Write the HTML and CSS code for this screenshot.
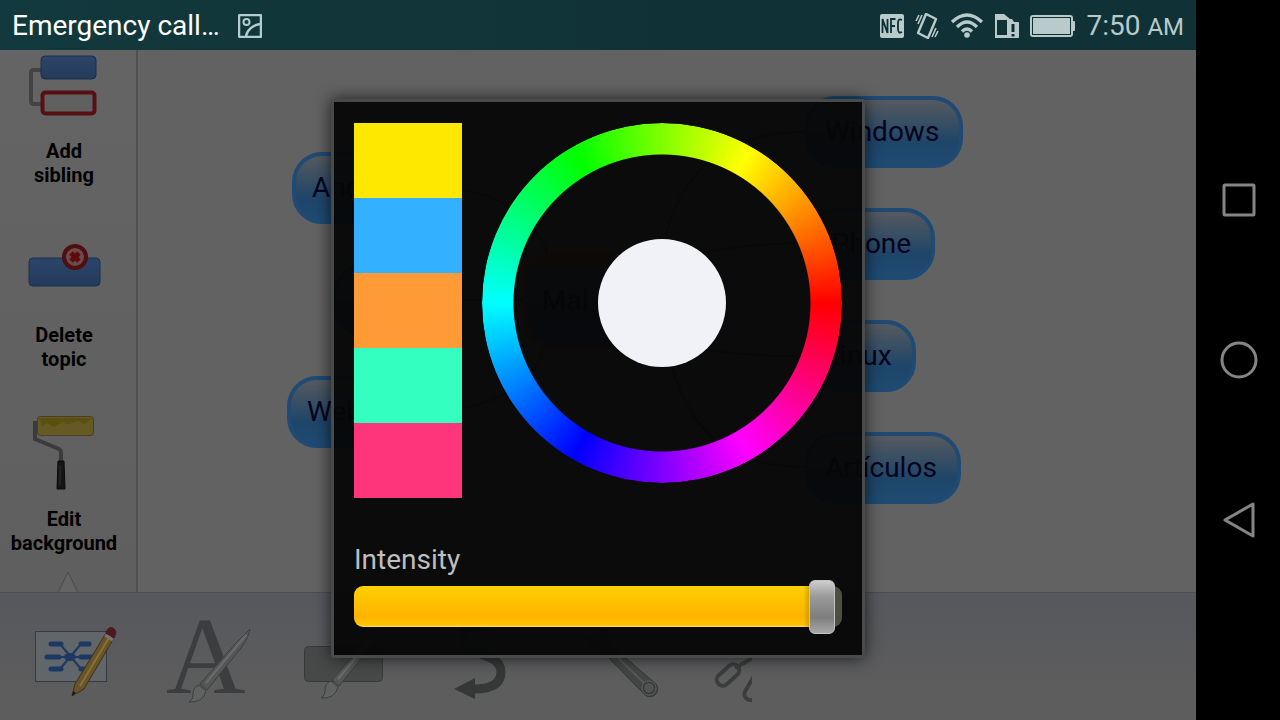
FILE: index.html
```html
<!DOCTYPE html>
<html lang="en">
<head>
  <meta charset="UTF-8" />
  <meta name="viewport" content="width=device-width, initial-scale=1.0" />
  <title>Mind map - Color</title>
  <link rel="stylesheet" href="styles.css">
</head>
<body>
  <div class="screen">
    <header class="status">
      <span class="carrier">Emergency call…</span>
      <svg class="shot" width="24" height="24" viewBox="0 0 24 24" fill="none" stroke="#b4cdd0" stroke-width="2">
        <rect x="1" y="1" width="22" height="22" rx="1" stroke-width="2.500"/>
        <circle cx="8.500" cy="8" r="3"/>
        <path d="M8 22C9 16 15 11 22 10" stroke-width="2.500"/>
      </svg>
      <div class="indicators">
        <svg width="24" height="24" viewBox="0 0 24 24">
          <rect width="24" height="24" rx="2" fill="#b9cacb"/>
          <path d="M2.500 19V5L7.500 19V5M11 19V5H15.500M11 12H15M22 6Q18 4 18 9V15Q18 20 22 18" fill="none" stroke="#0f3033" stroke-width="1.800"/>
        </svg>
        <svg width="24" height="26" viewBox="0 0 24 26" fill="none" stroke="#b9cacb" stroke-width="1.600">
          <path d="M11 1L21 6L13 25L3 20Z" stroke-width="2.400" stroke-linejoin="round"/>
          <path d="M1 8L4 2M3 11L7 2M17 24L21 15M20 24L23 18"/>
        </svg>
        <svg width="34" height="26" viewBox="0 0 34 26" fill="none" stroke="#b9cacb" stroke-width="3.400">
          <path d="M2 9Q17 -5 32 9M7 14Q17 4 27 14M12 18.500Q17 13.500 22 18.500"/>
          <circle cx="17" cy="22" r="2.800" fill="#b9cacb" stroke="none"/>
        </svg>
        <svg width="24" height="24" viewBox="0 0 24 24">
          <path d="M0 0H9L15 5V10H12V21H14V24H0ZM2 6V21H12V6Z" fill="#b9cacb" fill-rule="evenodd"/>
          <path d="M12 5H17L19 8H12Z" fill="#b9cacb"/>
          <rect x="12" y="8" width="12" height="16" rx="1" fill="#b9cacb"/>
          <path d="M18 10V18M18 20V22.500" stroke="#0f3033" stroke-width="3"/>
        </svg>
        <svg width="45" height="24" viewBox="0 0 45 24">
          <rect x="1" y="2" width="41" height="20" rx="2" fill="#b9cacb" stroke="#b9cacb" stroke-width="2"/>
          <rect x="2.500" y="3.500" width="38" height="17" fill="none" stroke="#0f3033"/>
          <rect x="42" y="7" width="3" height="10" rx="1" fill="#b9cacb"/>
        </svg>
        <span class="clock">7:50 <small>AM</small></span>
      </div>
    </header>

    <div class="workspace">
      <nav class="sidebar">
        <ul>
          <li><button type="button">
            <svg viewBox="0 0 128 136">
              <path d="M42 67H34Q31 67 31 70V98Q31 101 34 101H42" fill="none" stroke="#424242" stroke-width="4"/>
              <rect x="41" y="53" width="55" height="23" rx="4" fill="url(#blue)" stroke="#1b3050"/>
              <rect x="42.500" y="89.500" width="52" height="21" rx="3" fill="#606060" stroke="#561012" stroke-width="4"/>
            </svg>
            <span>Add<br>sibling</span>
          </button></li>
          <li><button type="button">
            <svg viewBox="0 0 128 136">
              <rect x="29" y="71" width="71" height="28" rx="4" fill="url(#blue)" stroke="#1b3050"/>
              <circle cx="75" cy="70" r="11" fill="#6b4c4c" stroke="#500e10" stroke-width="4"/>
              <path d="M71 66L79 74M79 66L71 74" stroke="#600a0c" stroke-width="5"/>
            </svg>
            <span>Delete<br>topic</span>
          </button></li>
          <li><button type="button">
            <svg viewBox="0 0 128 136">
              <path d="M39 52H35V68L59 78Q61 79 61 82V90" fill="none" stroke="#3b3b3b" stroke-width="4"/>
              <rect x="37.500" y="45.500" width="56" height="19" rx="3" fill="#655a24" stroke="#493f20"/>
              <path d="M39 47H92L85 53L78 50L68 53L62 51L54 56L47 52L42 55Z" fill="#5b4f12"/>
              <path d="M58 90H64L65 118H57Z" fill="#151515" stroke="#0a0a0a"/>
              <path d="M60 94V114" stroke="#333"/>
            </svg>
            <span>Edit<br>background</span>
          </button></li>
          <li><button type="button" aria-label="More">
            <svg viewBox="0 0 128 136">
              <path d="M56 42L68 17L80 42Z" fill="#646464" stroke="#4b4b4b"/>
            </svg>
          </button></li>
        </ul>
      </nav>

      <main class="canvas">
        <svg class="links" fill="none" stroke="#353535" stroke-width="2">
          <path d="M524 205C535 130 580 82 667 82M540 210C580 197 620 194 667 193M540 293C580 304 620 306 667 306M530 300C545 370 580 417 667 417"/>
          <path d="M300 139C360 139 395 165 410 205M300 250H384M300 360C360 358 400 330 405 297"/>
        </svg>
        <div class="node android">Android</div>
        <div class="node middle"></div>
        <div class="node web">Web</div>
        <div class="node root">Mal</div>
        <div class="node windows">Windows</div>
        <div class="node iphone">iPhone</div>
        <div class="node linux">Linux</div>
        <div class="node articulos">Artículos</div>
      </main>
    </div>

    <footer class="toolbar">
      <button type="button" aria-label="Edit map">
        <svg viewBox="0 0 136 127">
          <rect x="28.500" y="38.500" width="71" height="50" fill="#60666a" stroke="#353b43"/>
          <path d="M44 51H54M44 76H54M40 64H52M74 51H82M74 76H82M74 64H86" stroke="#1b3962" stroke-width="5" stroke-linecap="round"/>
          <path d="M53 51L74 76M53 76L74 51M50 64H76" stroke="#1b3962" stroke-width="2"/>
          <ellipse cx="63" cy="64" rx="6" ry="4" fill="#1b3962"/>
          <path d="M65 103L68 91L99 40L107 45L77 96Z" fill="#6a5427" stroke="#39301e"/>
          <path d="M73 93L103 43" stroke="#85703d" stroke-width="2"/>
          <path d="M65 103L66 98L69 100Z" fill="#1e1a15"/>
          <path d="M99 40Q101 33 106 35Q111 38 107 45Z" fill="#4b1a20" stroke="#4b1a20"/>
          <path d="M98 42L106 47" stroke="#777" stroke-width="3"/>
        </svg>
      </button>
      <button type="button" aria-label="Font style">
        <svg viewBox="0 0 136 127">
          <text class="letter" x="23" y="100">A</text>
          <use href="#brush" x="46" y="36"/>
        </svg>
      </button>
      <button type="button" aria-label="Topic style">
        <svg viewBox="0 0 136 127">
          <rect x="25.500" y="53.500" width="78" height="35" rx="4" fill="#474949" stroke="#383a3a"/>
          <use href="#brush" x="42" y="32"/>
        </svg>
      </button>
      <button type="button" aria-label="Connection">
        <svg viewBox="0 0 136 127">
          <path d="M76 34Q46 30 47 45C48 64 86 58 86 79Q86 96 59 96" fill="none" stroke="#363737" stroke-width="9"/>
          <path d="M39 96L60 85V106Z" fill="#363737"/>
        </svg>
      </button>
      <button type="button" aria-label="Settings">
        <svg viewBox="0 0 136 127">
          <path d="M34 42Q44 48 50 35Q60 42 60 52L105 91A7 7 0 0 1 93 101L51 58Q38 56 34 42Z" fill="#434545" stroke="#343636"/>
          <path d="M60 58L94 91" stroke="#565858" stroke-width="2"/>
          <circle cx="98" cy="95" r="6" fill="#515252" stroke="#373838" stroke-width="2"/>
          <circle cx="98" cy="95" r="7" fill="none" stroke="#606161"/>
        </svg>
      </button>
      <button type="button" aria-label="Link">
        <svg class="cut" viewBox="0 0 65 127">
          <g fill="none" stroke="#3b3d3d" stroke-width="4">
            <rect x="-13" y="-6" width="26" height="12" rx="6" transform="translate(41 82) rotate(-42)"/>
            <rect x="-13" y="-6" width="26" height="12" rx="6" transform="translate(67 95) rotate(-60)"/>
            <path d="M48 75L66 65"/>
          </g>
        </svg>
      </button>
    </footer>

    <div class="overlay">
      <section class="dialog" role="dialog" aria-label="Color">
        <div class="picker">
          <div class="swatches">
            <button type="button" class="yellow" aria-label="Yellow"></button>
            <button type="button" class="blue" aria-label="Blue"></button>
            <button type="button" class="orange" aria-label="Orange"></button>
            <button type="button" class="green" aria-label="Green"></button>
            <button type="button" class="pink" aria-label="Pink"></button>
          </div>
          <div class="wheel">
            <button type="button" class="current" aria-label="Current color"></button>
          </div>
        </div>
        <label for="intensity">Intensity</label>
        <input type="range" id="intensity" min="0" max="1000" value="984">
      </section>
    </div>
  </div>

  <nav class="navbar">
    <button type="button" aria-label="Recent">
      <svg viewBox="0 0 40 40"><rect x="5" y="5" width="30" height="30" rx="1"/></svg>
    </button>
    <button type="button" aria-label="Home">
      <svg viewBox="0 0 40 40"><circle cx="20" cy="20" r="17"/></svg>
    </button>
    <button type="button" aria-label="Back">
      <svg viewBox="0 0 40 40"><path d="M34 4V36L6 20Z"/></svg>
    </button>
  </nav>

  <!-- shared shapes -->
  <svg class="defs" width="0" height="0">
    <defs>
      <linearGradient id="blue" x1="0" y1="0" x2="0" y2="1">
        <stop offset="0" stop-color="#2b4568"/>
        <stop offset="1" stop-color="#243a5b"/>
      </linearGradient>
      <g id="brush">
        <path d="M61 0Q60 8 52 19L18 61L11 55L46 15Z" fill="#555757" stroke="#3c3e3e"/>
        <path d="M57 6L17 54" stroke="#6a6c6c" stroke-width="2"/>
        <path d="M10 56L17 62Q14 74 0 73Q5 70 4 65Q4 58 10 56Z" fill="#606262" stroke="#3c3e3e"/>
      </g>
    </defs>
  </svg>
</body>
</html>
```
FILE: styles.css
```css
:root {
  --status-bg: #103236;
  --status-fg: #b9cacb;
  --canvas-bg: #626262;
  --line: #505050;
  --node-border: #1e4a74;
}
* { box-sizing: border-box; margin: 0; padding: 0; }
body { display: flex; height: 100vh; overflow: hidden; font-family: Roboto, sans-serif; background: #000; }
button { background: none; border: 0; font: inherit; color: inherit; cursor: pointer; }
svg { display: block; flex: none; }
.defs { position: absolute; }

.screen { position: relative; flex: 1; min-width: 0; display: flex; flex-direction: column; }

/* status bar */
.status { height: 50px; display: flex; align-items: center; gap: 18px; padding: 1px 12px 0; background: linear-gradient(to right, #12393d, var(--status-bg) 60%); font-size: 28px; color: #fff; }
.indicators { display: flex; align-items: center; gap: 11px; margin-left: auto; color: var(--status-fg); }
.clock { white-space: nowrap; }
.clock small { font-size: 24px; }

/* topic tools on the left, map on the right */
.workspace { flex: 1; min-height: 0; display: flex; background: var(--canvas-bg); }
.sidebar { width: 138px; overflow: hidden; border-right: 2px solid var(--line); background: linear-gradient(#646464, #5f5f5f); }
.sidebar ul { list-style: none; width: 128px; margin-top: -47px; }
.sidebar button { display: flex; flex-direction: column; align-items: center; width: 128px; height: 184px; font-size: 20px; font-weight: bold; line-height: 24px; color: #000; }
.sidebar svg { width: 128px; height: 136px; }

.canvas { position: relative; flex: 1; overflow: hidden; }
.links { width: 100%; height: 100%; }
.node { position: absolute; height: 72px; padding: 0 20px 0 16px; border: 4px solid var(--node-border); border-radius: 30px; background: linear-gradient(#555a5f, #1f4568 65%, #1f4a72); font-size: 28px; line-height: 64px; color: #04041c; }
.android { left: 154px; top: 102px; }
.middle { left: 195px; top: 214px; width: 130px; }
.web { left: 149px; top: 326px; }
.root { left: 384px; top: 204px; width: 170px; height: 94px; border-color: #8a3a08; line-height: 86px; }
.windows { left: 667px; top: 46px; }
.iphone { left: 667px; top: 158px; }
.linux { left: 667px; top: 270px; }
.articulos { left: 667px; top: 382px; }

/* bottom tools */
.toolbar { height: 128px; display: flex; padding-left: 7px; border-top: 1px solid #4c4d50; background: linear-gradient(#57585d, #5d5d5d 80%); }
.toolbar svg { width: 136px; height: 127px; }
.toolbar .cut { width: 65px; }
.letter { font: 110px "Liberation Serif", serif; fill: #3b3d3e; }

/* colour dialog */
.overlay { position: absolute; inset: 50px 0 0; display: flex; align-items: center; justify-content: center; padding-bottom: 14px; }
.dialog { padding: 21px 20px; border: 3px solid #494a4a; border-radius: 3px; background: rgba(6, 6, 6, .95); box-shadow: 0 0 16px rgba(0, 0, 0, .7); }
.picker { display: flex; gap: 20px; }
.swatches { width: 108px; display: flex; flex-direction: column; }
.swatches button { height: 75px; }
.yellow { background: #ffe800; }
.blue { background: #33b0ff; }
.orange { background: #ff9b36; }
.green { background: #33ffc0; }
.pink { background: #ff357c; }
.wheel { position: relative; width: 360px; height: 360px; display: flex; align-items: center; justify-content: center; }
.wheel::before {
  content: "";
  position: absolute;
  inset: 0;
  border-radius: 50%;
  background: conic-gradient(from 30deg, #ff0, #f00, #f0f, #00f, #0ff, #0f0, #ff0);
  -webkit-mask: radial-gradient(circle, transparent 148px, #000 149px);
  mask: radial-gradient(circle, transparent 148px, #000 149px);
}
.current { width: 128px; height: 128px; border-radius: 50%; background: #f1f2f7; position: relative; }
.dialog label { display: block; margin-top: 46px; font-size: 28px; line-height: 32px; color: #bebebe; }
.dialog input { -webkit-appearance: none; appearance: none; display: block; width: 100%; height: 54px; margin-top: 4px; background: none; }
.dialog input::-webkit-slider-runnable-track {
  height: 41px;
  border-radius: 9px;
  background: linear-gradient(to right, transparent 92%, #6b6000 96%, #4d4f43 98%), linear-gradient(#ffd000, #ffb400 75%, #ffc400 95%, #ffdc70);
}
.dialog input::-webkit-slider-thumb {
  -webkit-appearance: none;
  width: 26px;
  height: 54px;
  margin-top: -6px;
  border: 1px solid #c4c4c4;
  border-radius: 6px;
  background: linear-gradient(#cecece, #9a9a9a 30%, #7e7e7e 70%, #a8a8a8);
}

/* system buttons */
.navbar { width: 84px; display: flex; flex-direction: column; align-items: center; justify-content: center; gap: 120px; padding-left: 2px; background: #000; }
.navbar svg { width: 40px; height: 40px; fill: none; stroke: #858585; stroke-width: 3; stroke-linejoin: round; }
```
